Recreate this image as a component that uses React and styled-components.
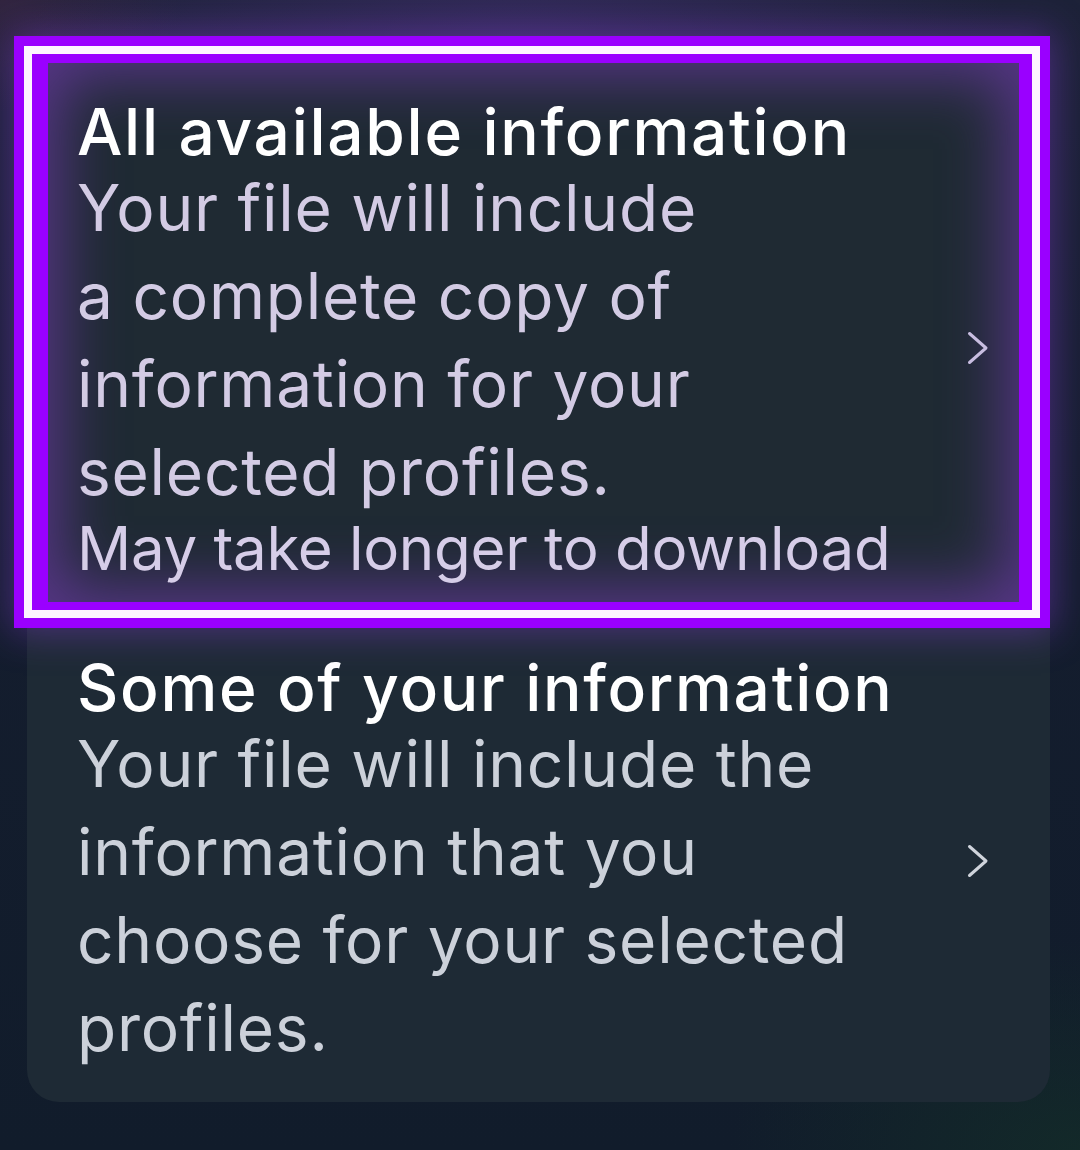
import React from "react";
import styled, { createGlobalStyle } from "styled-components";

const GlobalStyle = createGlobalStyle`
  html, body {
    margin: 0;
    padding: 0;
    background: #121c2b;
  }
  body {
    font-family: "Inter", "Noto Sans", sans-serif;
    -webkit-font-smoothing: antialiased;
  }
`;

const Page = styled.div`
  width: 1080px;
  height: 1150px;
  overflow: hidden;
  box-sizing: border-box;
  padding-top: 54px;
  background:
    radial-gradient(ellipse 700px 260px at 520px 40px, rgba(70, 50, 120, 0.55), transparent 70%),
    radial-gradient(ellipse 260px 160px at 0px 0px, rgba(70, 40, 70, 0.5), transparent 70%),
    radial-gradient(ellipse 500px 300px at 1080px 1150px, rgba(20, 50, 40, 0.6), transparent 70%),
    linear-gradient(180deg, #1d2238 0%, #141d2e 50%, #111c2b 100%);
`;

const List = styled.div`
  display: flex;
  flex-direction: column;
`;

const Option = styled.div`
  position: relative;
  display: flex;
  align-items: center;
  box-sizing: border-box;
  color: #fff;
  ${(p) =>
    p.$selected
      ? `
    z-index: 2;
    width: 1000px;
    margin-left: 32px;
    border-style: solid;
    border-color: #9a00ff;
    border-width: 9px 13px 8px 16px;
    background: #1f2a33;
    padding: 37px 30px 21px 29px;
    box-shadow:
      inset 0 0 60px 14px rgba(98, 56, 150, 0.85),
      0 0 0 8px #fdf6ff,
      0 0 0 18px #9a00ff,
      0 0 36px 22px rgba(130, 60, 210, 0.45);
  `
      : `
    z-index: 1;
    width: 1023px;
    margin: -20px 0 0 27px;
    background: #1e2a35;
    border-radius: 0 0 32px 32px;
    padding: 66px 61px 30px 50px;
  `}
`;

const Body = styled.div`
  flex: 1;
  display: flex;
  flex-direction: column;
`;

const Title = styled.div`
  font-size: 64px;
  font-weight: 500;
  line-height: 64px;
  letter-spacing: 1.7px;
  color: #ffffff;
`;

const Line = styled.div`
  font-size: 64px;
  font-weight: 400;
  line-height: 88px;
  letter-spacing: 0.75px;
  color: ${(p) => (p.$tint ? "#d3cbe4" : "#ccd1da")};
`;

const Note = styled.div`
  font-size: 60px;
  font-weight: 400;
  line-height: 65px;
  letter-spacing: -0.3px;
  color: #d6cde8;
`;

const Chevron = styled.svg`
  flex: none;
  width: 22px;
  height: 34px;
  margin-top: ${(p) => p.$shift}px;
`;

const Arrow = ({ color, shift }) => (
  <Chevron viewBox="0 0 22 34" fill="none" $shift={shift}>
    <polyline
      points="2.5,2.5 19,17 2.5,31.5"
      stroke={color}
      strokeWidth="3"
      strokeLinecap="round"
      strokeLinejoin="round"
    />
  </Chevron>
);

const options = [
  {
    title: "All available information",
    lines: [
      "Your file will include",
      "a complete copy of",
      "information for your",
      "selected profiles.",
    ],
    note: "May take longer to download",
    selected: true,
    shift: 14,
  },
  {
    title: "Some of your information",
    lines: [
      "Your file will include the",
      "information that you",
      "choose for your selected",
      "profiles.",
    ],
    shift: -6,
  },
];

const App = () => {
  return (
    <>
      <GlobalStyle />
      <Page>
        <List>
          {options.map((o) => (
            <Option key={o.title} $selected={o.selected}>
              <Body>
                <Title>{o.title}</Title>
                {o.lines.map((l) => (
                  <Line key={l} $tint={o.selected}>
                    {l}
                  </Line>
                ))}
                {o.note && <Note>{o.note}</Note>}
              </Body>
              <Arrow color={o.selected ? "#c8bde0" : "#d0d4dc"} shift={o.shift} />
            </Option>
          ))}
        </List>
      </Page>
    </>
  );
};

export default App;
